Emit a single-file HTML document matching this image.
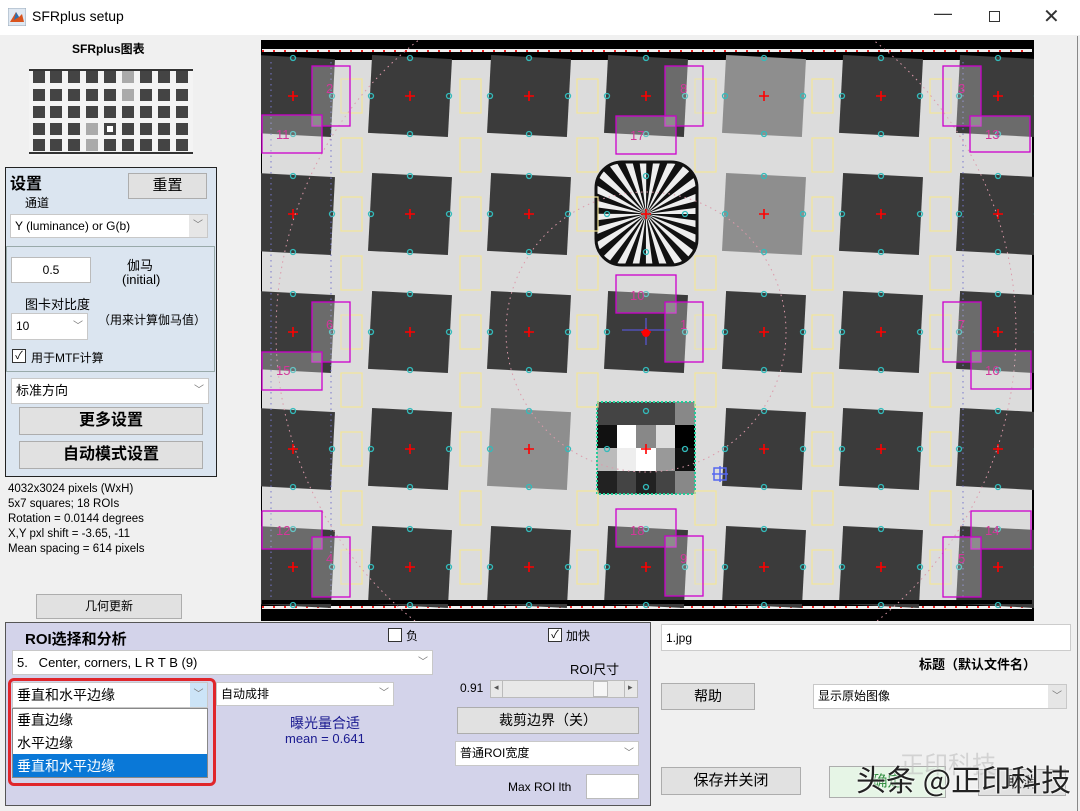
<!DOCTYPE html>
<html><head><meta charset="utf-8">
<style>
*{box-sizing:border-box;margin:0;padding:0}
body{width:1080px;height:811px;overflow:hidden;background:#f0f0f0;font-family:"Liberation Sans","Noto Sans CJK SC",sans-serif;position:relative;color:#000}
.a{position:absolute}
.btn{position:absolute;background:#e1e1e1;border:1px solid #adadad;text-align:center;font-size:13px}
.sel{position:absolute;background:#fff;border:1px solid #c8c8c8;font-size:12px;padding-left:4px;line-height:22px}
.sel .ar{position:absolute;right:0;top:0;bottom:0;width:18px;background:#e6e6e6;color:#777;font-size:10px;text-align:center}
.t{position:absolute;white-space:nowrap}
</style></head><body>
<div class="a" style="left:0;top:0;width:1080px;height:35px;background:#fff"></div>
<svg class="a" style="left:8px;top:8px" width="18" height="18"><rect x="0" y="0" width="18" height="18" fill="#dfe8f2" stroke="#9ab"/><path d="M2 14 L8 4 L11 9 L14 6 L16 14Z" fill="#d9541e"/><path d="M8 4 L11 9 L6 12Z" fill="#2a6fb0"/></svg>
<div class="t" style="left:32px;top:8px;font-size:14px">SFRplus setup</div>
<div class="t" style="left:934px;top:3px;font-size:18px;color:#333">—</div>
<div class="a" style="left:989px;top:11px;width:11px;height:11px;border:1px solid #333"></div>
<div class="t" style="left:1043px;top:4px;font-size:20px;color:#333">✕</div>

<div class="t" style="left:72px;top:40px;font-size:12px;font-weight:bold">SFRplus图表</div>
<svg class="a" style="left:29px;top:68px" width="164" height="88">
<rect width="164" height="88" fill="#f4f4f4"/>
<rect x="0" y="1" width="164" height="2" fill="#333"/><rect x="0" y="84" width="164" height="2" fill="#333"/>
<g fill="#444">
<rect x="4" y="3" width="12" height="12"/><rect x="21" y="3" width="12" height="12"/><rect x="39" y="3" width="12" height="12"/><rect x="57" y="3" width="12" height="12"/><rect x="75" y="3" width="12" height="12"/><rect x="93" y="3" width="12" height="12" fill="#aaa"/><rect x="111" y="3" width="12" height="12"/><rect x="129" y="3" width="12" height="12"/><rect x="147" y="3" width="12" height="12"/>
<rect x="4" y="21" width="12" height="12"/><rect x="21" y="21" width="12" height="12"/><rect x="39" y="21" width="12" height="12"/><rect x="57" y="21" width="12" height="12"/><rect x="75" y="21" width="12" height="12"/><rect x="93" y="21" width="12" height="12" fill="#aaa"/><rect x="111" y="21" width="12" height="12"/><rect x="129" y="21" width="12" height="12"/><rect x="147" y="21" width="12" height="12"/>
<rect x="4" y="38" width="12" height="12"/><rect x="21" y="38" width="12" height="12"/><rect x="39" y="38" width="12" height="12"/><rect x="57" y="38" width="12" height="12"/><rect x="75" y="38" width="12" height="12"/><rect x="93" y="38" width="12" height="12"/><rect x="111" y="38" width="12" height="12"/><rect x="129" y="38" width="12" height="12"/><rect x="147" y="38" width="12" height="12"/>
<rect x="4" y="55" width="12" height="12"/><rect x="21" y="55" width="12" height="12"/><rect x="39" y="55" width="12" height="12"/><rect x="57" y="55" width="12" height="12" fill="#aaa"/><rect x="75" y="55" width="12" height="12"/><rect x="93" y="55" width="12" height="12"/><rect x="111" y="55" width="12" height="12"/><rect x="129" y="55" width="12" height="12"/><rect x="147" y="55" width="12" height="12"/>
<rect x="4" y="71" width="12" height="12"/><rect x="21" y="71" width="12" height="12"/><rect x="39" y="71" width="12" height="12"/><rect x="57" y="71" width="12" height="12" fill="#aaa"/><rect x="75" y="71" width="12" height="12"/><rect x="93" y="71" width="12" height="12"/><rect x="111" y="71" width="12" height="12"/><rect x="129" y="71" width="12" height="12"/><rect x="147" y="71" width="12" height="12"/>
</g><rect x="78" y="58" width="6" height="6" fill="#fff"/></svg>

<div class="a" style="left:5px;top:167px;width:212px;height:310px;background:#dbe5f0;border:1px solid #222"></div>
<div class="a" style="left:6px;top:246px;width:209px;height:126px;border:1px solid #9aa;"></div>
<div class="t" style="left:10px;top:170px;font-size:16px;font-weight:bold">设置</div>
<div class="btn" style="left:128px;top:173px;width:79px;height:26px;font-size:15px;line-height:24px">重置</div>
<div class="t" style="left:25px;top:194px;font-size:12px">通道</div>
<div class="sel" style="left:10px;top:214px;width:198px;height:24px">Y (luminance) or G(b)<span class="ar">﹀</span></div>
<div class="a" style="left:11px;top:257px;width:80px;height:26px;background:#fff;border:1px solid #bbb;font-size:12px;text-align:center;line-height:24px">0.5</div>
<div class="t" style="left:127px;top:255px;font-size:13px">伽马</div>
<div class="t" style="left:122px;top:272px;font-size:13px">(initial)</div>
<div class="t" style="left:25px;top:294px;font-size:13px">图卡对比度</div>
<div class="sel" style="left:11px;top:313px;width:77px;height:27px;line-height:25px;font-size:12px">10<span class="ar" style="background:#fff">﹀</span></div>
<div class="t" style="left:98px;top:311px;font-size:12px">（用来计算伽马值）</div>
<div class="a" style="left:12px;top:349px;width:14px;height:14px;background:#fff;border:1px solid #333;font-size:11px;line-height:12px;text-align:center">✓</div>
<div class="t" style="left:31px;top:349px;font-size:12px">用于MTF计算</div>
<div class="sel" style="left:11px;top:378px;width:198px;height:26px;line-height:24px;font-size:13px">标准方向<span class="ar" style="background:#fff">﹀</span></div>
<div class="btn" style="left:19px;top:407px;width:184px;height:28px;font-size:16px;font-weight:bold;line-height:26px">更多设置</div>
<div class="btn" style="left:19px;top:441px;width:184px;height:28px;font-size:16px;font-weight:bold;line-height:26px">自动模式设置</div>
<div class="t" style="left:8px;top:482px;font-size:11.5px;line-height:15px">4032x3024 pixels (WxH)<br>5x7 squares; 18 ROIs<br>Rotation = 0.0144 degrees<br>X,Y pxl shift = -3.65, -11<br>Mean spacing = 614 pixels</div>
<div class="btn" style="left:36px;top:594px;width:146px;height:25px;font-size:12px;line-height:23px">几何更新</div>

<svg class="a" style="left:261px;top:40px" width="773" height="581" viewBox="261 40 773 581">
<defs>
<rect id="sq" x="-40" y="-39" width="80" height="78" transform="rotate(3)"/>
<g id="mk"><path d="M-5 0H5M0 -5V5" stroke="#f00" stroke-width="1.6"/>
<g fill="none" stroke="#3bb" stroke-width="1.3"><circle cx="-39" cy="0" r="2.5"/><circle cx="39" cy="0" r="2.5"/><circle cx="0" cy="-38" r="2.5"/><circle cx="0" cy="38" r="2.5"/></g></g>
<g id="yb" fill="none" stroke="#f2e59a" stroke-width="1.2"><rect x="-10" y="-17" width="21" height="34"/></g>
<clipPath id="stc"><rect x="596" y="162" width="101" height="103" rx="26"/></clipPath>
</defs>
<rect x="261" y="40" width="773" height="581" fill="#000"/>
<rect x="262" y="60" width="770" height="541" fill="#dcdcdc"/>
<rect x="262" y="49" width="770" height="3" fill="#f0f0f0"/>
<path d="M262 51H1032" stroke="#e22" stroke-width="2" stroke-dasharray="2 9"/>
<rect x="262" y="606" width="770" height="3" fill="#f0f0f0"/>
<path d="M262 607H1032" stroke="#e22" stroke-width="2" stroke-dasharray="2 9"/>
<g fill="#3b3b3b">
<use href="#sq" x="293" y="96"/><use href="#sq" x="410" y="96"/><use href="#sq" x="529" y="96"/><use href="#sq" x="646" y="96"/><use href="#sq" x="764" y="96" fill="#8e8e8e"/><use href="#sq" x="881" y="96"/><use href="#sq" x="998" y="96"/>
<use href="#sq" x="293" y="214"/><use href="#sq" x="410" y="214"/><use href="#sq" x="529" y="214"/><use href="#sq" x="764" y="214" fill="#8e8e8e"/><use href="#sq" x="881" y="214"/><use href="#sq" x="998" y="214"/>
<use href="#sq" x="293" y="332"/><use href="#sq" x="410" y="332"/><use href="#sq" x="529" y="332"/><use href="#sq" x="646" y="332"/><use href="#sq" x="764" y="332"/><use href="#sq" x="881" y="332"/><use href="#sq" x="998" y="332"/>
<use href="#sq" x="293" y="449"/><use href="#sq" x="410" y="449"/><use href="#sq" x="529" y="449" fill="#8e8e8e"/><use href="#sq" x="764" y="449"/><use href="#sq" x="881" y="449"/><use href="#sq" x="998" y="449"/>
<use href="#sq" x="293" y="567"/><use href="#sq" x="410" y="567"/><use href="#sq" x="529" y="567"/><use href="#sq" x="646" y="567"/><use href="#sq" x="764" y="567"/><use href="#sq" x="881" y="567"/><use href="#sq" x="998" y="567"/>
</g>
<rect x="262" y="600" width="770" height="4" fill="#000"/>
<!-- star -->
<rect x="596" y="162" width="101" height="103" rx="26" fill="#111"/>
<g clip-path="url(#stc)">
<rect x="596" y="162" width="101" height="103" fill="#eee"/>
<circle cx="646" cy="214" r="35" fill="none" stroke="#111" stroke-width="70" stroke-dasharray="4.58 4.58"/>
</g>
<rect x="596" y="162" width="101" height="103" rx="26" fill="none" stroke="#111" stroke-width="3"/>
<g>
<rect x="597" y="402" width="98" height="92" fill="#444"/>
<rect x="617" y="425" width="19" height="23" fill="#fff"/><rect x="656" y="425" width="19" height="23" fill="#ddd"/><rect x="675" y="425" width="20" height="23" fill="#000"/>
<rect x="597" y="448" width="20" height="23" fill="#bbb"/><rect x="617" y="448" width="19" height="23" fill="#eee"/><rect x="636" y="448" width="20" height="23" fill="#fff"/><rect x="656" y="448" width="19" height="23" fill="#999"/><rect x="675" y="448" width="20" height="23" fill="#111"/>
<rect x="597" y="425" width="20" height="23" fill="#111"/><rect x="636" y="425" width="20" height="23" fill="#888"/><rect x="675" y="402" width="20" height="23" fill="#888"/><rect x="675" y="471" width="20" height="23" fill="#888"/><rect x="636" y="471" width="20" height="23" fill="#222"/><rect x="597" y="471" width="20" height="23" fill="#222"/>
<rect x="597" y="402" width="98" height="92" fill="none" stroke="#2c9" stroke-width="2" stroke-dasharray="2 2"/>
</g>
<g>
<use href="#mk" x="293" y="96"/><use href="#mk" x="410" y="96"/><use href="#mk" x="529" y="96"/><use href="#mk" x="646" y="96"/><use href="#mk" x="764" y="96"/><use href="#mk" x="881" y="96"/><use href="#mk" x="998" y="96"/>
<use href="#mk" x="293" y="214"/><use href="#mk" x="410" y="214"/><use href="#mk" x="529" y="214"/><use href="#mk" x="646" y="214"/><use href="#mk" x="764" y="214"/><use href="#mk" x="881" y="214"/><use href="#mk" x="998" y="214"/>
<use href="#mk" x="293" y="332"/><use href="#mk" x="410" y="332"/><use href="#mk" x="529" y="332"/><use href="#mk" x="646" y="332"/><use href="#mk" x="764" y="332"/><use href="#mk" x="881" y="332"/><use href="#mk" x="998" y="332"/>
<use href="#mk" x="293" y="449"/><use href="#mk" x="410" y="449"/><use href="#mk" x="529" y="449"/><use href="#mk" x="646" y="449"/><use href="#mk" x="764" y="449"/><use href="#mk" x="881" y="449"/><use href="#mk" x="998" y="449"/>
<use href="#mk" x="293" y="567"/><use href="#mk" x="410" y="567"/><use href="#mk" x="529" y="567"/><use href="#mk" x="646" y="567"/><use href="#mk" x="764" y="567"/><use href="#mk" x="881" y="567"/><use href="#mk" x="998" y="567"/>
</g>
<g>
<use href="#yb" x="351" y="96"/><use href="#yb" x="470" y="96"/><use href="#yb" x="587" y="96"/><use href="#yb" x="705" y="96"/><use href="#yb" x="822" y="96"/><use href="#yb" x="940" y="96"/>
<use href="#yb" x="351" y="214"/><use href="#yb" x="470" y="214"/><use href="#yb" x="587" y="214"/><use href="#yb" x="822" y="214"/><use href="#yb" x="940" y="214"/>
<use href="#yb" x="351" y="332"/><use href="#yb" x="470" y="332"/><use href="#yb" x="587" y="332"/><use href="#yb" x="705" y="332"/><use href="#yb" x="822" y="332"/><use href="#yb" x="940" y="332"/>
<use href="#yb" x="351" y="449"/><use href="#yb" x="470" y="449"/><use href="#yb" x="822" y="449"/><use href="#yb" x="940" y="449"/>
<use href="#yb" x="351" y="567"/><use href="#yb" x="470" y="567"/><use href="#yb" x="587" y="567"/><use href="#yb" x="705" y="567"/><use href="#yb" x="822" y="567"/><use href="#yb" x="940" y="567"/>
<use href="#yb" x="351" y="155"/><use href="#yb" x="470" y="155"/><use href="#yb" x="587" y="155"/><use href="#yb" x="705" y="155"/><use href="#yb" x="822" y="155"/><use href="#yb" x="940" y="155"/>
<use href="#yb" x="351" y="273"/><use href="#yb" x="470" y="273"/><use href="#yb" x="587" y="273"/><use href="#yb" x="705" y="273"/><use href="#yb" x="822" y="273"/><use href="#yb" x="940" y="273"/>
<use href="#yb" x="351" y="390"/><use href="#yb" x="470" y="390"/><use href="#yb" x="587" y="390"/><use href="#yb" x="705" y="390"/><use href="#yb" x="822" y="390"/><use href="#yb" x="940" y="390"/>
<use href="#yb" x="351" y="508"/><use href="#yb" x="470" y="508"/><use href="#yb" x="587" y="508"/><use href="#yb" x="705" y="508"/><use href="#yb" x="822" y="508"/><use href="#yb" x="940" y="508"/>
</g>
<g fill="none" stroke-dasharray="1.5 4" stroke-width="1">
<path d="M271 62V598M331 62V598M963 62V598" stroke="#77c"/>
<circle cx="646" cy="332" r="140" stroke="#d9a"/>
<circle cx="646" cy="332" r="370" stroke="#d9a"/>
</g>
<g fill="rgba(220,220,220,0.3)" stroke="#c0c" stroke-width="1.3">
<rect x="312" y="66" width="38" height="60"/><rect x="262" y="115" width="60" height="38"/>
<rect x="665" y="66" width="38" height="60"/><rect x="616" y="116" width="60" height="38"/>
<rect x="943" y="66" width="38" height="60"/><rect x="970" y="116" width="60" height="36"/>
<rect x="616" y="275" width="60" height="38"/><rect x="665" y="302" width="38" height="60"/>
<rect x="312" y="302" width="38" height="60"/><rect x="262" y="352" width="60" height="38"/>
<rect x="943" y="302" width="38" height="60"/><rect x="971" y="351" width="60" height="38"/>
<rect x="262" y="511" width="60" height="38"/><rect x="312" y="537" width="38" height="60"/>
<rect x="616" y="509" width="60" height="38"/><rect x="665" y="536" width="38" height="60"/>
<rect x="971" y="511" width="60" height="38"/><rect x="943" y="537" width="38" height="60"/>
</g>
<g fill="#d2379a" font-size="13" font-family="Liberation Sans">
<text x="326" y="93">2</text><text x="276" y="139">11</text>
<text x="680" y="93">8</text><text x="630" y="140">17</text>
<text x="958" y="93">3</text><text x="985" y="139">13</text>
<text x="630" y="300">10</text><text x="680" y="329">1</text>
<text x="326" y="329">6</text><text x="276" y="375">15</text>
<text x="958" y="329">7</text><text x="985" y="375">16</text>
<text x="276" y="535">12</text><text x="326" y="563">4</text>
<text x="630" y="535">18</text><text x="680" y="563">9</text>
<text x="985" y="535">14</text><text x="958" y="563">5</text>
</g>
<path d="M622 330H670M646 318V345" stroke="#55c" stroke-width="1.3"/>
<circle cx="646" cy="333" r="4" fill="#f00"/>
<path d="M712 474H728M720 466V482M714 468h12v12h-12z" stroke="#56e" stroke-width="1.5" fill="none"/>
</svg>

<div class="a" style="left:5px;top:622px;width:646px;height:184px;background:#d3d3ea;border:1px solid #555"></div>
<div class="t" style="left:25px;top:628px;font-size:15px;font-weight:bold">ROI选择和分析</div>
<div class="a" style="left:388px;top:628px;width:14px;height:14px;background:#fff;border:1px solid #333"></div>
<div class="t" style="left:406px;top:627px;font-size:12px">负</div>
<div class="a" style="left:548px;top:628px;width:14px;height:14px;background:#fff;border:1px solid #333;font-size:11px;line-height:12px;text-align:center">✓</div>
<div class="t" style="left:566px;top:627px;font-size:12px">加快</div>
<div class="sel" style="left:12px;top:650px;width:421px;height:25px;font-size:13px;line-height:23px">5.&nbsp;&nbsp; Center, corners, L R T B (9)<span class="ar" style="background:#fff">﹀</span></div>
<div class="t" style="left:570px;top:659px;font-size:13px">ROI尺寸</div>
<div class="t" style="left:460px;top:681px;font-size:12px">0.91</div>
<div class="a" style="left:490px;top:680px;width:148px;height:18px;background:#e8e8e8;border:1px solid #bbb"></div>
<div class="a" style="left:502px;top:681px;width:1px;height:16px;background:#bbb"></div>
<div class="a" style="left:593px;top:681px;width:15px;height:16px;background:#f6f6f6;border:1px solid #bbb"></div>
<div class="a" style="left:624px;top:681px;width:1px;height:16px;background:#bbb"></div>
<div class="t" style="left:494px;top:682px;font-size:9px;color:#555">◂</div>
<div class="t" style="left:628px;top:682px;font-size:9px;color:#555">▸</div>
<div class="btn" style="left:457px;top:707px;width:182px;height:27px;font-size:14px;line-height:25px">裁剪边界（关）</div>
<div class="sel" style="left:455px;top:741px;width:184px;height:25px;line-height:23px">普通ROI宽度<span class="ar" style="background:#fff">﹀</span></div>
<div class="t" style="left:508px;top:780px;font-size:12px">Max ROI lth</div>
<div class="a" style="left:586px;top:774px;width:53px;height:25px;background:#fff;border:1px solid #bbb"></div>
<div class="sel" style="left:216px;top:682px;width:178px;height:24px">自动成排<span class="ar" style="background:#fff">﹀</span></div>
<div class="t" style="left:290px;top:713px;font-size:14px;color:#1a1a90">曝光量合适</div>
<div class="t" style="left:285px;top:731px;font-size:13px;color:#1a1a90">mean = 0.641</div>
<div class="a" style="left:8px;top:678px;width:208px;height:108px;border:3px solid #e0262b;border-radius:6px"></div>
<div class="sel" style="left:12px;top:682px;width:196px;height:26px;line-height:24px;font-size:14px">垂直和水平边缘<span class="ar" style="background:#cce4f7;width:17px">﹀</span></div>
<div class="a" style="left:12px;top:708px;width:196px;height:70px;background:#fff;border:1px solid #888"></div>
<div class="t" style="left:17px;top:710px;font-size:14px">垂直边缘</div>
<div class="t" style="left:17px;top:733px;font-size:14px">水平边缘</div>
<div class="a" style="left:13px;top:754px;width:194px;height:23px;background:#0a78d7"></div>
<div class="t" style="left:17px;top:756px;font-size:14px;color:#fff">垂直和水平边缘</div>

<div class="a" style="left:661px;top:624px;width:410px;height:27px;background:#fff;border:1px solid #ccc;font-size:12px;padding:6px 4px">1.jpg</div>
<div class="t" style="left:919px;top:654px;font-size:13px;font-weight:bold">标题（默认文件名）</div>
<div class="btn" style="left:661px;top:683px;width:94px;height:27px;font-size:14px;line-height:25px">帮助</div>
<div class="sel" style="left:813px;top:684px;width:254px;height:25px;line-height:23px">显示原始图像<span class="ar">﹀</span></div>
<div class="btn" style="left:661px;top:767px;width:140px;height:28px;font-size:15px;line-height:26px">保存并关闭</div>
<div class="btn" style="left:829px;top:766px;width:117px;height:32px;background:#e6f5e6;font-size:15px;line-height:30px;color:#2a8a3a">确定</div>
<div class="btn" style="left:978px;top:769px;width:88px;height:27px;font-size:15px;line-height:25px">取消</div>
<div class="t" style="left:900px;top:745px;font-size:24px;color:rgba(190,190,190,0.6)">正印科技</div>
<div class="t" style="left:856px;top:756px;font-size:30px;color:#222;font-family:'Noto Sans CJK SC',sans-serif;text-shadow:0 0 2px #fff,0 0 2px #fff">头条 @正印科技</div>
<div class="a" style="left:1077px;top:36px;width:1px;height:775px;background:#888"></div>
</body></html>
